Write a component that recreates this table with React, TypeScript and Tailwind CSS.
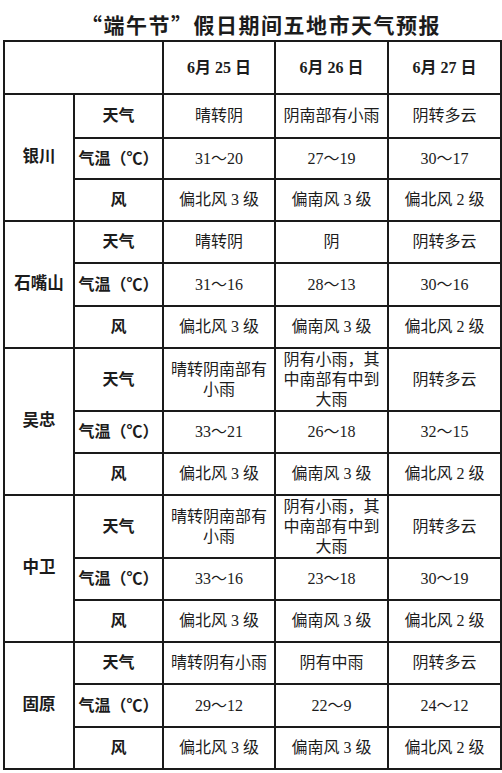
import React from 'react';

type Row = { label: string; h: string; cells: string[][] };
type City = { name: string; rows: Row[] };

const wind = [['偏北风 3 级'], ['偏南风 3 级'], ['偏北风 2 级']];

const cities: City[] = [
  {
    name: '银川',
    rows: [
      { label: '天气', h: 'h-[44px]', cells: [['晴转阴'], ['阴南部有小雨'], ['阴转多云']] },
      { label: '气温（℃）', h: 'h-[41px]', cells: [['31～20'], ['27～19'], ['30～17']] },
      { label: '风', h: 'h-[42px]', cells: wind },
    ],
  },
  {
    name: '石嘴山',
    rows: [
      { label: '天气', h: 'h-[42px]', cells: [['晴转阴'], ['阴'], ['阴转多云']] },
      { label: '气温（℃）', h: 'h-[43px]', cells: [['31～16'], ['28～13'], ['30～16']] },
      { label: '风', h: 'h-[42px]', cells: wind },
    ],
  },
  {
    name: '吴忠',
    rows: [
      {
        label: '天气',
        h: 'h-[63px]',
        cells: [['晴转阴南部有', '小雨'], ['阴有小雨，其', '中南部有中到', '大雨'], ['阴转多云']],
      },
      { label: '气温（℃）', h: 'h-[42px]', cells: [['33～21'], ['26～18'], ['32～15']] },
      { label: '风', h: 'h-[42px]', cells: wind },
    ],
  },
  {
    name: '中卫',
    rows: [
      {
        label: '天气',
        h: 'h-[63px]',
        cells: [['晴转阴南部有', '小雨'], ['阴有小雨，其', '中南部有中到', '大雨'], ['阴转多云']],
      },
      { label: '气温（℃）', h: 'h-[42px]', cells: [['33～16'], ['23～18'], ['30～19']] },
      { label: '风', h: 'h-[42px]', cells: wind },
    ],
  },
  {
    name: '固原',
    rows: [
      { label: '天气', h: 'h-[42px]', cells: [['晴转阴有小雨'], ['阴有中雨'], ['阴转多云']] },
      { label: '气温（℃）', h: 'h-[43px]', cells: [['29～12'], ['22～9'], ['24～12']] },
      { label: '风', h: 'h-[42px]', cells: wind },
    ],
  },
];

const cell = 'border-2 border-[#1a1a1a] text-center align-middle p-0';

export default function App() {
  return (
    <div
      className="w-[502px] h-[773px] bg-white text-[#1c1c1c]"
      style={{ fontFamily: '"Liberation Serif", "Noto Sans CJK SC", serif' }}
    >
      {/* title */}
      <div className="h-[40px] flex items-center justify-center pl-[20px] pt-[8px]">
        <h1
          className="text-[21px] font-bold tracking-[1.5px] leading-none"
          style={{ fontFamily: '"Noto Sans CJK SC", serif' }}
        >
          “端午节”假日期间五地市天气预报
        </h1>
      </div>

      <table className="ml-[3px] w-[497px] table-fixed border-collapse text-[16px]">
        <colgroup>
          <col className="w-[70px]" />
          <col className="w-[89px]" />
          <col className="w-[112px]" />
          <col className="w-[113px]" />
          <col className="w-[113px]" />
        </colgroup>
        <tbody>
          <tr className="h-[53px]">
            <td colSpan={2} className={cell}></td>
            {['6月 25 日', '6月 26 日', '6月 27 日'].map((d) => (
              <td key={d} className={`${cell} font-bold`}>
                {d}
              </td>
            ))}
          </tr>
          {cities.map((c) =>
            c.rows.map((r, i) => (
              <tr key={c.name + r.label} className={r.h}>
                {i === 0 && (
                  <td rowSpan={3} className={`${cell} font-bold text-[16.5px]`}>
                    {c.name}
                  </td>
                )}
                <td className={`${cell} font-bold`}>{r.label}</td>
                {r.cells.map((lines, j) => (
                  <td key={j} className={`${cell} leading-[20px]`}>
                    {lines.map((l, k) => (
                      <div key={k}>{l}</div>
                    ))}
                  </td>
                ))}
              </tr>
            ))
          )}
        </tbody>
      </table>
    </div>
  );
}
